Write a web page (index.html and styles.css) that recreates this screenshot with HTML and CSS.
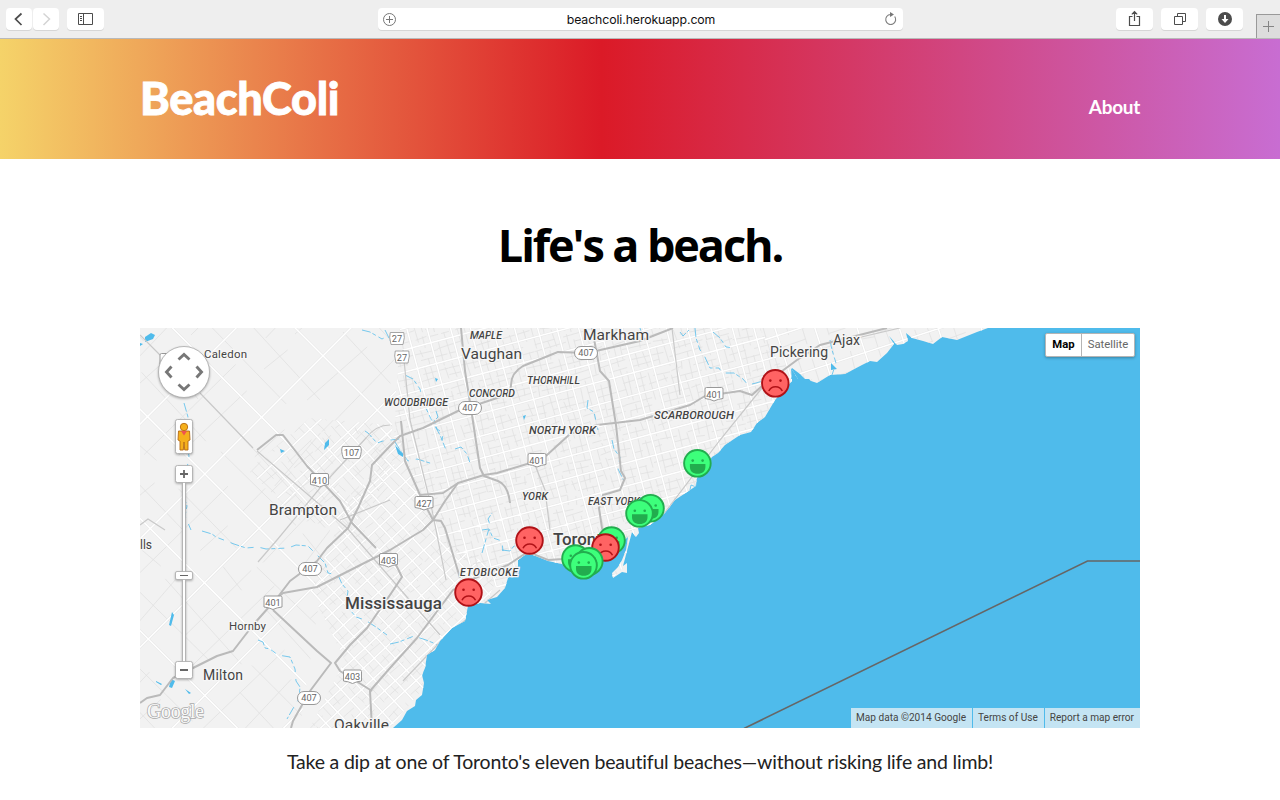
FILE: index.html
```html
<!DOCTYPE html>
<html lang="en">
<head>
<meta charset="utf-8">
<title>BeachColi</title>
<link rel="stylesheet" href="styles.css">
</head>
<body>
<div class="toolbar">
  <div class="group nav">
    <span class="btn small"><svg width="26" height="22" fill="none" stroke="#4c4c4c" stroke-width="1.700"><path d="M15.500 5.500 9.500 11l6 6"/></svg></span>
    <span class="btn small"><svg width="26" height="22" fill="none" stroke="#d4d4d4" stroke-width="1.500"><path d="m10.500 5.500 6 5.500-6 6"/></svg></span>
    <span class="btn side"><svg width="37" height="22" fill="none" stroke="#4c4c4c"><path d="M11.500 5.500h14v11h-14zM16.500 5.500v11M13 8.500h2M13 10.500h2M13 12.500h2"/></svg></span>
  </div>
  <div class="address">
    <svg width="22" height="22" fill="none" stroke="#777"><circle cx="11.500" cy="11.500" r="6"/><path d="M8 11.500h7M11.500 8v7"/></svg>
    <span class="url">beachcoli.herokuapp.com</span>
    <svg width="22" height="22" fill="none" stroke="#808080" stroke-width="1.200"><path d="M13.700 8.500A5 5 0 1 1 9.500 6.500h1.500"/><path d="m9 4 4 2.500-4 2.500z" fill="#777" stroke="none"/></svg>
  </div>
  <div class="group tools">
    <span class="btn"><svg width="37" height="22" fill="none" stroke="#4c4c4c" stroke-width="1.200"><path d="M16.500 8.500H13.500v9h10v-9h-3M18.500 13V4M15.800 6.300 18.500 3.600l2.700 2.700"/></svg></span>
    <span class="btn"><svg width="37" height="22" fill="none" stroke="#4c4c4c"><path d="M13.500 8.500h8v8h-8zM16.500 8V5.500h8v8H22"/></svg></span>
    <span class="btn"><svg width="37" height="22"><circle cx="19" cy="11" r="7" fill="#4c4c4c"/><path d="M18 7h2v4h2.500L19 15l-3.500-4H18z" fill="#fff"/></svg></span>
  </div>
  <div class="newtab"><svg width="23" height="23" fill="none" stroke="#858585"><path d="M6 11.500h11M11.500 6v11"/></svg></div>
</div>

<header class="banner">
  <div class="wrap banner-row">
    <div class="brand">BeachColi</div>
    <a class="about">About</a>
  </div>
</header>

<main class="wrap">
  <h1 class="headline">Life's a beach.</h1>
  <div class="map">
    <svg class="canvas" width="1000" height="400" viewBox="140 328 1000 400">
      <defs>
        <clipPath id="ground"><path d="M140 328H988L977 332 957 340 942 337 933 344 923 341 912 338 906 333 908 341 903 344 897 345 889 336 894 344 887 353 877 362 870 361 862 365 845 374 830 375 817 383 811 381 809 379 798 379 791 368 792 381 775 400 765 417 757 423 751 432 740 435 725 445 718 453 712 457 697 478 696 486 690 490 675 500 665 513 650 525 638 528 639 533 636 537 632 532 628 547 627 551 623 566 627 563 627 573 622 572 613 578 612 573 618 567 622 560 626 550 628 537 603 558 583 578 562 564 548 561 533 555 525 555 518 560 518 570 508 578 505 588 497 597 487 600 491 604 480 603 468 606 465 621 452 628 440 641 435 650 427 655 425 668 422 675 424 683 422 695 416 700 415 706 407 711 402 720 393 728H140z"/></clipPath>
        <clipPath id="rural"><path d="M140 328H404L390 440 330 530 300 728H140z"/></clipPath>
        <clipPath id="brampton"><path d="M248 470 310 418 392 425 395 470 350 530 300 520z"/></clipPath>
        <clipPath id="mississauga"><path d="M350 500 400 440 440 540 500 570 480 620 390 728H310L345 660 310 590z"/></clipPath>
        <clipPath id="city"><path d="M400 328H760L800 400 600 590 500 590 440 540 394 440z"/></clipPath>
        <clipPath id="east"><path d="M760 328H990V400H790z"/></clipPath>
        <g id="happy"><circle r="13.300" fill="#3dff7b" stroke="#22ad4e" stroke-width="1.900"/><circle cx="-4.700" cy="-2.700" r="1.300" fill="#22ad4e"/><circle cx="5.200" cy="-2.700" r="1.300" fill="#22ad4e"/><path d="M-7.500.8H8V3.500C8 8 5 10.500.2 10.500S-7.500 8-7.500 3.500z" fill="#22ad4e"/></g>
        <g id="sad"><circle r="13.300" fill="#ff6363" stroke="#b01217" stroke-width="1.900"/><circle cx="-5" cy="-2.700" r="1.300" fill="#b01217"/><circle cx="5.200" cy="-2.700" r="1.300" fill="#b01217"/><path d="M-6.500 7.700C-4 2 4.500 2 7 7.700" fill="none" stroke="#b01217" stroke-width="1.500"/></g>
        <path id="oval" d="M-5-6.500H5a6.500 6.500 0 0 1 0 13H-5a6.500 6.500 0 0 1 0-13z"/>
        <path id="shield" d="M-7.500-6.500h15a1.500 1.500 0 0 1 1.500 1.500V4.500Q4 5 0 7-4 5-9 4.500V-5a1.500 1.500 0 0 1 1.500-1.500z"/>
        <path id="crest" d="M-9-6H9Q11-2 8 6H-8Q-11-2-9-6z"/>
      </defs>
      <rect x="140" y="328" width="1000" height="400" fill="#4fbbeb"/>
      <g clip-path="url(#ground)">
        <rect x="140" y="328" width="860" height="400" fill="#f2f2f2"/>
        <g id="streets"></g>
        <g class="creek">
          <path d="M184 403l4 14-2 25 3 14-6 38 4 12-2 10 6 14"/>
          <path d="M202 531l10 3 4 3 18 7 12 4 12-1 8 2 22-1 8-3 12 1 8 8 9 9 3 10 10 2 4 9 6 7-2 14 10 12 9 3 11 7 11 8"/>
          <path d="M258 640l5 2 2 6 5 1 8 6 12 2 5 12 1 12 4 6-1 12-4 6-8 14"/>
          <path d="M362 330l8 2 12 7 10-5M365 431l3 2 9 10 6-2 16-2"/>
          <path d="M405 375l8 4 7 10 3 13 9 19 8 14 6 15M455 449l6-2 6 7 4 12M395 442l5 8 8 11 9-2 16 5M436 411l2 6-4 4 3 8 6 4-1 8"/>
          <path d="M482 553l8-28-2-6 4-6M502 550l8 1 4-5 8-1 3-8 5-7M482 530l7-1 4 9 9 3 1 10"/>
          <path d="M588 400l-1 8 7 4 4 18M612 440l2 9 6 8-2 12 6 12M680 332l3 4 6-6"/>
          <path d="M695 328l1 10 4 12 4 5 6 13 9 0 3 5 12 0 9 6 5 6 8-2 10-3 3-13M713 332l7 6 6 9 9 1M640 328l3 10 5 2M797 448l-6 9"/>
          <path d="M830 340l2 10 4 13-4 12M390 644l9-2 15-6 12 4 10 4 5 6M385 330l6 12"/>
          <path d="M690 490l1-5 5 2 1-8"/>
        </g>
        <g fill="#4fbbeb"><path d="M145 337l6-4 4 2-2 4-8 3zM140 343l3 1-3 2zM325 443l4-4 0 6-5 5zM280 449l5 2-4 2zM172 612l2 3-3 11-2-1zM171 679l4 2-3 7-3-1zM156 681l6 3-1 1-5-3zM185 689l6 4-2 1zM395 445l8 9 0 3-5-3zM523 416l3-1-2 5zM435 378l3 1-2 3zM831 363l6 6-6 1zM792 368l8 6 5 5-14 0z"/></g>
        <g fill="none" stroke="#c9c9c9" stroke-width="1.200">
          <path d="M140 335 160 355M200 393 253 448M257 451 347 528 440 635M403 350 410 420 432 510 446 580"/>
          <path d="M390 425Q376 425 366 438L320 488 277 540 258 562M672 328 680 395M840 342 900 328M663 515 720 440 762 388M403 681 440 642 500 590M535 465 545 490 550 530M340 520 390 500M140 525 148 519 165 530"/>
        </g>
        <g fill="none" stroke="#bababa" stroke-width="2" stroke-linejoin="round">
          <path d="M257 450 276 435 283 435 307 466 340 501 352 523 376 548"/>
          <path d="M140 703 147 698 160 695 173 678 197 666 217 656 233 651 253 625 277 598 290 581 317 561 327 548 348 528 358 508 370 481 372 465 390 446 400 436 423 428 460 410 470 407 500 397Q511 393 511 385 511 373 523 366L558 352 587 353 640 341 673 328"/>
          <path d="M277 598 283 593 317 587 390 550 423 530 433 520 445 501 458 483 484 475 497 473 527 464 547 455 570 434 597 425 640 420 690 405 705 396 740 391 752 395 762 386 797 360 820 345 887 328"/>
          <path d="M461 328 465 371 472 415 480 468 484 476 498 481Q508 485 510 503"/>
          <path d="M401 421 405 461 420 495 433 520 441 521 445 528 460 578M420 495 443 493 458 483"/>
          <path d="M592 328 600 371 609 381 616 425 621 471 625 478 620 490 603 495 599 508 602 528 607 540 580 555 563 559 548 560 533 554 523 555 508 565 470 580 453 590 417 638 390 668 370 691 372 728"/>
          <path d="M390 553 402 577 390 595 367 628 350 645 335 663 340 671 372 691M273 610 317 651 331 663 310 691 293 721 291 728"/>
        </g>
      </g>
      <path d="M744 728.500 1087.500 561H1140" fill="none" stroke="#666" stroke-width="1.600"/>
      <g class="signs">
        <use href="#oval" x="586" y="353"/><text x="586" y="356">407</text>
        <use href="#oval" x="470" y="408"/><text x="470" y="411">407</text>
        <use href="#oval" x="310" y="569"/><text x="310" y="572">407</text>
        <use href="#oval" x="309" y="698"/><text x="309" y="701">407</text>
        <use href="#shield" x="537" y="460"/><text x="537" y="463.500">401</text>
        <use href="#shield" x="714" y="394"/><text x="714" y="397.500">401</text>
        <use href="#shield" x="273" y="602.500"/><text x="273" y="606">401</text>
        <use href="#shield" x="319.500" y="480"/><text x="319.500" y="484">410</text>
        <use href="#shield" x="424" y="503"/><text x="424" y="506.500">427</text>
        <use href="#shield" x="388.500" y="560"/><text x="388.500" y="563.500">403</text>
        <use href="#shield" x="352.500" y="676.500"/><text x="352.500" y="680">403</text>
        <use href="#crest" x="351.500" y="452.500"/><text x="351.500" y="456">107</text>
        <use href="#crest" transform="translate(397 338.500)scale(.75 1)"/><text x="397" y="342">27</text>
        <use href="#crest" transform="translate(402 357)scale(.75 1)"/><text x="402" y="360.500">27</text>
        <use href="#shield" x="169" y="360"/>
      </g>
      <g class="town">
        <text x="204" y="358" font-size="11.500" textLength="43">Caledon</text>
        <text x="229" y="630" font-size="11.500" textLength="37">Hornby</text>
        <text x="140" y="549" font-size="12">lls</text>
        <text x="203" y="680" font-size="14" textLength="40">Milton</text>
        <text x="269" y="514.500" font-size="15.500" textLength="68">Brampton</text>
        <text x="461" y="358.500" font-size="15.500" textLength="61">Vaughan</text>
        <text x="583" y="339.500" font-size="15.500" textLength="66">Markham</text>
        <text x="770" y="357" font-size="14" textLength="58">Pickering</text>
        <text x="833" y="345" font-size="14" textLength="27">Ajax</text>
        <text x="334" y="730" font-size="15.500" textLength="55">Oakville</text>
        <text x="345" y="609" font-size="17" textLength="97" class="strong">Mississauga</text>
        <text x="553" y="545" font-size="17" textLength="58" class="strong">Toronto</text>
      </g>
      <g class="area">
        <text x="470" y="338.500" textLength="32">MAPLE</text>
        <text x="384" y="405.500" textLength="64">WOODBRIDGE</text>
        <text x="469" y="396.500" textLength="46">CONCORD</text>
        <text x="527" y="383.500" textLength="53">THORNHILL</text>
        <text x="529" y="433.500" font-size="11.500" textLength="67">NORTH YORK</text>
        <text x="654" y="418.500" font-size="11.500" textLength="80">SCARBOROUGH</text>
        <text x="522" y="499.500" textLength="26">YORK</text>
        <text x="588" y="504.500" textLength="52">EAST YORK</text>
        <text x="460" y="575.500" textLength="58">ETOBICOKE</text>
      </g>
      <use href="#sad" x="775.300" y="383.300"/>
      <use href="#happy" x="697.400" y="463.300"/>
      <use href="#happy" x="650.500" y="508.200"/>
      <use href="#happy" x="639.500" y="513.400"/>
      <use href="#happy" x="611.500" y="540.500"/>
      <use href="#sad" x="605.500" y="547.500"/>
      <use href="#happy" x="575.500" y="558.500"/>
      <use href="#happy" x="589.300" y="561.300"/>
      <use href="#happy" x="583.500" y="565.300"/>
      <use href="#sad" x="529.500" y="540.500"/>
      <use href="#sad" x="468.500" y="592.500"/>

      <g class="control">
        <circle cx="184" cy="372" r="25.500"/>
        <rect x="175.500" y="419.500" width="17" height="34" rx="2"/>
        <rect x="182.500" y="482" width="3" height="181"/>
        <rect x="175.500" y="465.500" width="17" height="17" rx="2"/>
        <rect x="175.500" y="571.500" width="17" height="8" rx="1.500"/>
        <rect x="175.500" y="661.500" width="17" height="17" rx="2"/>
      </g>
      <path d="M178.500 359.500 184 354.500 189.500 359.500M178.500 384.500 184 389.500 189.500 384.500M171.500 366.500 166.500 372 171.500 377.500M196.500 366.500 201.500 372 196.500 377.500" fill="none" stroke="#777" stroke-width="2.900"/>
      <path d="M180 474h8M184 470v8M180 670h8" stroke="#666" stroke-width="1.800"/><path d="M180 575.500h8" stroke="#666"/>
      <g stroke="#b66a13" stroke-width=".9" fill="#f5b01c"><path d="M178.500 431h11l.5 9-2 1v9h-3.300l-.7-8-.7 8H180v-9l-2-1z"/><circle cx="184" cy="427" r="3.700"/></g>
      <path d="M181 431h6l-3 4.500z" fill="#ef5350"/>
      <text x="147" y="718" class="google" textLength="57">Google</text>
    </svg>
    <div class="types"><span class="type current">Map</span><span class="type">Satellite</span></div>
    <div class="legal"><span>Map data ©2014 Google</span><span>Terms of Use</span><span>Report a map error</span></div>
  </div>
  <p class="tagline">Take a dip at one of Toronto's eleven beautiful beaches—without risking life and limb!</p>
</main>
<script src="streets.js"></script>
</body>
</html>
```
FILE: styles.css
```css
* { box-sizing: border-box; }
body { margin: 0; height: 800px; overflow: hidden; background: #fff; color: #222; font-family: Lato, "Open Sans", sans-serif; }
svg { display: block; }
.wrap { width: 1000px; margin: 0 auto; }

.toolbar { position: relative; height: 39px; padding: 8px 0 0 6px; display: flex; align-items: flex-start; background: #eee; border-bottom: 1px solid #b9b9b9; }
.group { display: flex; }
.nav { width: 372px; gap: 1px; }
.btn { width: 37px; height: 22px; background: #fff; border-radius: 4px; box-shadow: 0 1px 0 #d6d6d6; }
.small { width: 26px; }
.side { margin-left: 7px; }
.address { width: 525px; height: 22px; display: flex; justify-content: space-between; background: #fff; border-radius: 4px; box-shadow: 0 1px 0 #d6d6d6; }
.url { padding-left: 1px; font: 12.300px/23px Inter, sans-serif; color: #111; letter-spacing: -.1px; }
.tools { margin-left: 213px; gap: 8px; }
.newtab { position: absolute; right: 0; top: 14px; width: 24px; height: 24px; background: #ddd; border: solid #999; border-width: 1px 0 0 1px; }

.banner { height: 120px; background: linear-gradient(90deg, #f5d369 0, #db1a27 47%, #c86dd2 100%); color: #fff; }
.banner-row { display: flex; justify-content: space-between; }
.brand { padding-top: 32px; font-size: 45px; line-height: 54px; font-weight: 900; letter-spacing: -.3px; -webkit-text-stroke: .8px #fff; }
.about { padding-top: 55px; font: 700 19px/26px Lato, sans-serif; letter-spacing: -.3px; }

.headline { margin: 0; height: 169px; padding-top: 56px; text-align: center; color: #000; font: 700 45px/60px "Open Sans", sans-serif; letter-spacing: -2.100px; }
.map { position: relative; height: 400px; overflow: hidden; }
.creek { fill: none; stroke: #4fbbeb; stroke-width: .9; stroke-opacity: .85; stroke-dasharray: 9 2 4 3 6 7; }
.signs { fill: #fff; stroke: #999; font: 9.200px Roboto, sans-serif; }
.signs text { fill: #666; stroke: none; text-anchor: middle; }
.town, .area { fill: #444; stroke: #f6f6f6; stroke-width: 2.500px; paint-order: stroke; font-family: Roboto, sans-serif; }
.strong { font-weight: 500; }
.area { font-size: 10.500px; font-style: italic; font-weight: 500; }
.control { fill: #fff; stroke: #aaa; stroke-width: .8; filter: drop-shadow(0 1px 1px rgba(0,0,0,.3)); }
.google { font: 20px "Liberation Serif", serif; fill: #fafafa; stroke: #aaa; stroke-width: 1.500px; paint-order: stroke; }
.types { position: absolute; top: 5px; right: 5px; display: flex; height: 24px; background: #fff; border: 1px solid #b5b5b5; border-radius: 2px; box-shadow: 0 1px 3px rgba(0,0,0,.3); font: 11.300px/22px Roboto, sans-serif; color: #666; }
.type { width: 52px; text-align: center; }
.current { width: 36px; border-right: 1px solid #b5b5b5; color: #000; font-weight: 700; }
.legal { position: absolute; right: 0; bottom: 0; display: flex; gap: 1px; font: 10.100px/20px Roboto, sans-serif; color: #444; }
.legal span { padding: 0 6px 0 5px; background: #c4e4f3; white-space: nowrap; }
.tagline { margin: 0; padding-top: 20px; text-align: center; font-size: 19.500px; line-height: 28px; white-space: nowrap; letter-spacing: -.19px; }
```
FILE: streets.js
```js
// Draws the local street grid of each district, clipped to its outline.
var seed = 7;
function random() {
  seed = (seed * 16807) % 2147483647;
  return seed / 2147483647;
}
function grid(district, angle, gap, minor, cx, cy, reach) {
  var white = '', grey = '';
  for (var pass = 0; pass < 2; pass++) {
    var a = (angle + pass * 90) * Math.PI / 180;
    var c = Math.cos(a), s = Math.sin(a), row = 0;
    for (var d = -reach; d < reach; d += gap * (0.85 + random() * 0.3), row++) {
      var t = -reach;
      while (t < reach) {
        var major = row % minor === 0;
        var len = major ? reach * 2 : gap * (1 + random() * 4);
        var bend = major ? 0 : (random() - 0.5) * gap * 0.5;
        var p = 'M' + (cx + t * c - d * s).toFixed(1) + ' ' + (cy + t * s + d * c).toFixed(1) +
                'L' + (cx + (t + len) * c - (d + bend) * s).toFixed(1) + ' ' + (cy + (t + len) * s + (d + bend) * c).toFixed(1);
        if (major) white += p; else grey += p;
        t += len + gap * random() * 2;
      }
    }
  }
  return '<g clip-path="url(#' + district + ')" fill="none">' +
    '<path stroke="#e1e1e1" stroke-width=".8" d="' + grey + '"/>' +
    '<path stroke="#e6e6e6" stroke-width="2.400" d="' + white + '"/>' +
    '<path stroke="#fff" stroke-width="1.500" d="' + white + '"/></g>';
}
document.getElementById('streets').innerHTML =
  grid('rural', 45, 27, 3, 260, 520, 330) +
  grid('brampton', 47, 9, 3, 320, 470, 100) +
  grid('mississauga', 47, 8, 2, 390, 600, 190) +
  grid('city', -15, 7, 3, 590, 450, 290) +
  grid('east', -18, 13, 3, 860, 350, 160);
```
